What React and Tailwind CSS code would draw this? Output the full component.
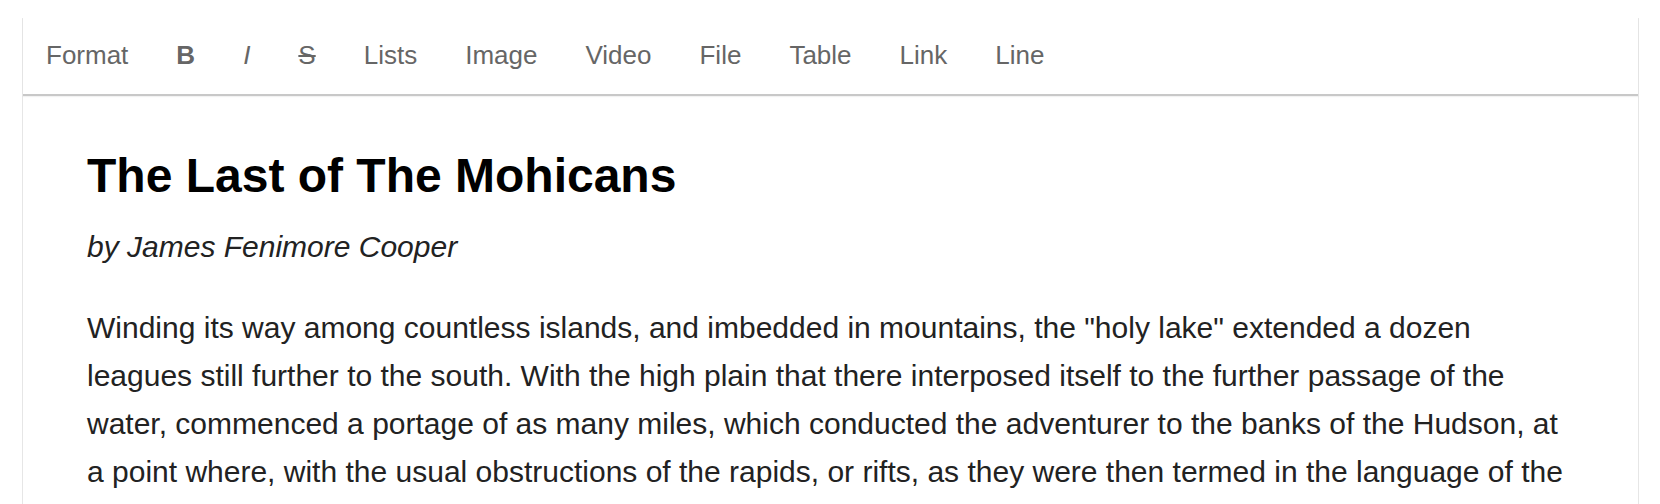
import React from 'react';

const tools = [
  { label: 'Format' },
  { label: 'B', className: 'font-bold' },
  { label: 'I', className: 'italic' },
  { label: 'S', className: 'line-through' },
  { label: 'Lists' },
  { label: 'Image' },
  { label: 'Video' },
  { label: 'File' },
  { label: 'Table' },
  { label: 'Link' },
  { label: 'Line' },
];

const App = () => {
  return (
    <div className="min-h-screen bg-white font-['Liberation_Sans',Arial,sans-serif]">
      <div className="ml-[22px] mt-[18px] w-[1617px] border-x border-[#e6e6e6] bg-white">
        {/* Toolbar */}
        <div className="flex h-[78px] items-center gap-12 border-b-2 border-[#c8c8c8] pb-[2px] pl-[23px] shadow-[0_1px_1px_rgba(0,0,0,0.05)]">
          {tools.map(tool => (
            <button
              key={tool.label}
              type="button"
              className={`text-[26px] leading-none text-[#666] ${tool.className || ''}`}
            >
              {tool.label}
            </button>
          ))}
        </div>

        {/* Editor content */}
        <div className="px-16 pt-[52px] text-[#222]">
          <h1 className="text-[48px] font-bold leading-[56px] text-black">The Last of The Mohicans</h1>
          <p className="mt-[19px] text-[30px] italic leading-[48px]">by James Fenimore Cooper</p>
          <p className="mt-[33px] text-[30px] leading-[48px]">
            Winding its way among countless islands, and imbedded in mountains, the "holy lake" extended a dozen
            leagues still further to the south. With the high plain that there interposed itself to the further
            passage of the water, commenced a portage of as many miles, which conducted the adventurer to the banks
            of the Hudson, at a point where, with the usual obstructions of the rapids, or rifts, as they were then
            termed in the language of the country, the river became navigable to the tide.
          </p>
        </div>
      </div>
    </div>
  );
};

export default App;
